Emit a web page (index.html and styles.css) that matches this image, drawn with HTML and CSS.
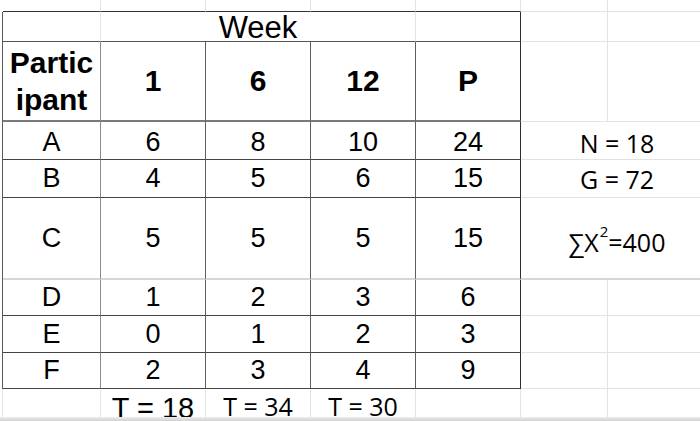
FILE: index.html
```html
<!DOCTYPE html>
<html lang="en">
<head>
<meta charset="utf-8">
<title>Week table</title>
<link rel="stylesheet" href="styles.css">
</head>
<body>
<div class="sheet">
  <!-- row 0 -->
  <div class="c sp"></div>
  <div class="c top"></div>
  <div class="c top"></div>
  <div class="c top"></div>
  <div class="c top"></div>
  <div class="c top"></div>
  <div class="c"></div>
  <div class="c"></div>

  <!-- row 1 -->
  <div class="c sp edge"></div>
  <div class="c h1"></div>
  <div class="c h1 week span3">Week</div>
  <div class="c h1 last"></div>
  <div class="c"></div>
  <div class="c"></div>

  <!-- row 2 -->
  <div class="c sp edge"></div>
  <div class="c h2 first bold"><span class="wrap">Participant</span></div>
  <div class="c h2 inner bold">1</div>
  <div class="c h2 inner bold">6</div>
  <div class="c h2 inner bold">12</div>
  <div class="c h2 last bold">P</div>
  <div class="c"></div>
  <div class="c"></div>

  <!-- row A -->
  <div class="c sp edge"></div>
  <div class="c tb first dn">A</div>
  <div class="c tb inner dn">6</div>
  <div class="c tb inner dn">8</div>
  <div class="c tb inner dn">10</div>
  <div class="c tb last dn">24</div>
  <div class="c note span2 dn">N = 18</div>

  <!-- row B -->
  <div class="c sp edge"></div>
  <div class="c tb first">B</div>
  <div class="c tb inner">4</div>
  <div class="c tb inner">5</div>
  <div class="c tb inner">6</div>
  <div class="c tb last">15</div>
  <div class="c note span2">G = 72</div>

  <!-- row C -->
  <div class="c sp edge"></div>
  <div class="c tb soft first">C</div>
  <div class="c tb soft inner">5</div>
  <div class="c tb soft inner">5</div>
  <div class="c tb soft inner">5</div>
  <div class="c tb soft last">15</div>
  <div class="c note span2 soft low">&sum;X<span class="sq">2</span>=400</div>

  <!-- row D -->
  <div class="c sp edge"></div>
  <div class="c tb first">D</div>
  <div class="c tb inner">1</div>
  <div class="c tb inner">2</div>
  <div class="c tb inner">3</div>
  <div class="c tb last">6</div>
  <div class="c"></div>
  <div class="c"></div>

  <!-- row E -->
  <div class="c sp edge"></div>
  <div class="c tb first">E</div>
  <div class="c tb inner">0</div>
  <div class="c tb inner">1</div>
  <div class="c tb inner">2</div>
  <div class="c tb last">3</div>
  <div class="c"></div>
  <div class="c"></div>

  <!-- row F -->
  <div class="c sp edge"></div>
  <div class="c tb first">F</div>
  <div class="c tb inner">2</div>
  <div class="c tb inner">3</div>
  <div class="c tb inner">4</div>
  <div class="c tb last">9</div>
  <div class="c"></div>
  <div class="c"></div>

  <!-- totals row -->
  <div class="c sp grid"></div>
  <div class="c"></div>
  <div class="c total arial">T = 18</div>
  <div class="c total cal">T = 34</div>
  <div class="c total cal">T = 30</div>
  <div class="c"></div>
  <div class="c"></div>
  <div class="c"></div>
</div>
<div class="hscroll"></div>
</body>
</html>
```

FILE: styles.css
```css
html, body {
  margin: 0;
  padding: 0;
  background: #ffffff;
  overflow: hidden;
}

.sheet {
  display: grid;
  grid-template-columns: 3px 98px 105px 105px 105px 105px 87px 106px;
  grid-template-rows: 12px 30px 80px 38px 38px 82px 36px 37px 36px 40px;
  width: 714px;
  font-family: "Liberation Sans", Arial, sans-serif;
  font-size: 27px;
  color: #000;
}

.c {
  box-sizing: border-box;
  display: flex;
  align-items: center;
  justify-content: center;
  border-right: 1px solid #e3e3e3;
  border-bottom: 1px solid #e3e3e3;
  white-space: nowrap;
}

.sp {
  border-right: none;
  border-bottom: none;
}

.sp.edge {
  border-right: 1px solid #5a5a5a;
}

.sp.grid {
  border-right: 1px solid #e3e3e3;
}

.top {
  border-bottom: 1px solid #333;
}

.h1 {
  border-bottom: 1px solid #555;
}

.week {
  font-size: 31px;
  padding-top: 3px;
}

.span3 {
  grid-column: span 3;
}

.span2 {
  grid-column: span 2;
}

.h2 {
  border-bottom: 2px solid #7a7a7a;
}

.bold {
  font-weight: bold;
  font-size: 30px;
}

.wrap {
  display: block;
  width: 90px;
  white-space: normal;
  word-break: break-all;
  text-align: center;
  line-height: 37px;
}

.tb {
  border-bottom: 1px solid #444;
}

.first {
  border-right: 1px solid #8a8a8a;
}

.inner {
  border-right: 1px solid #5e5e5e;
}

.last {
  border-right: 1px solid #2e2e2e;
}

.soft {
  border-bottom: 2px solid #d6d6d6;
}

.dn {
  padding-top: 4px;
}

.low {
  padding-top: 7px;
}

.note {
  font-family: "Open Sans", "DejaVu Sans", sans-serif;
  font-size: 25px;
}

.sq {
  font-size: 15px;
  position: relative;
  top: -11px;
  margin-left: 1px;
}

.total {
  align-items: flex-start;
  padding-top: 5px;
}

.arial {
  font-family: "Liberation Sans", Arial, sans-serif;
  font-size: 29px;
  line-height: 29px;
}

.cal {
  font-family: "Open Sans", "DejaVu Sans", sans-serif;
  font-size: 25px;
  line-height: 25px;
}

.hscroll {
  position: fixed;
  left: 0;
  right: 0;
  bottom: 0;
  height: 4px;
  background: linear-gradient(#ececec, #d2d2d2);
}
```
